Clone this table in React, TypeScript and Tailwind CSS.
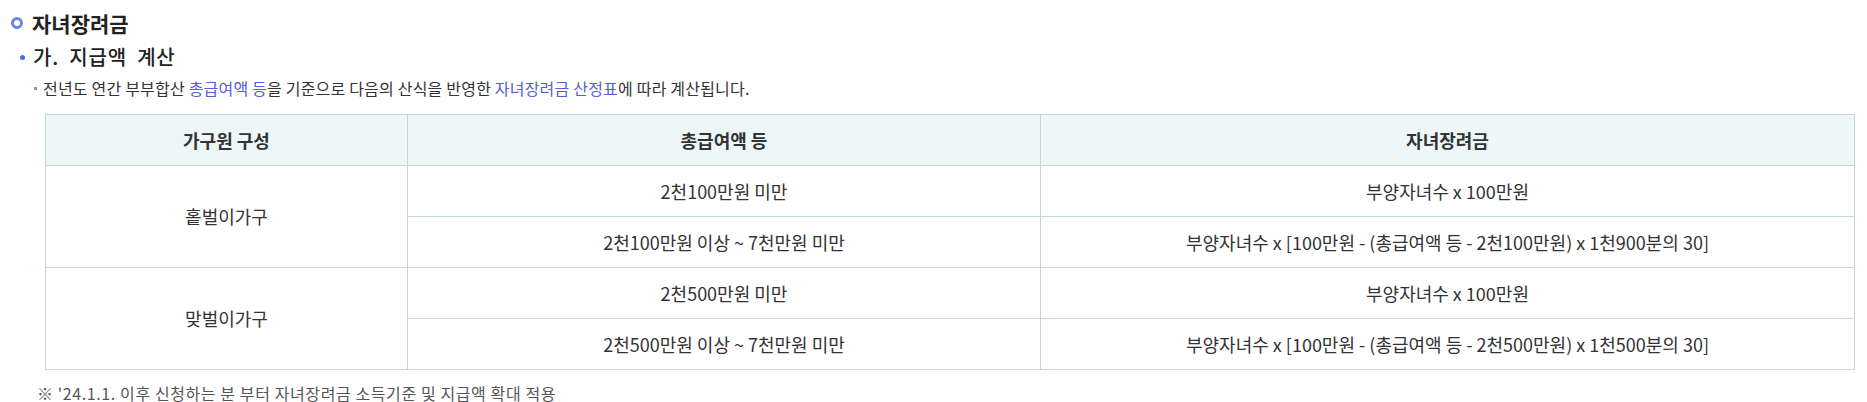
import React from 'react'

const FONT = { fontFamily: '"Noto Sans CJK KR", "Noto Sans", sans-serif' }

const GROUPS = [
  {
    name: '홑벌이가구',
    rows: [
      { income: '2천100만원 미만', amount: '부양자녀수 x 100만원' },
      { income: '2천100만원 이상 ~ 7천만원 미만', amount: '부양자녀수 x [100만원 - (총급여액 등 - 2천100만원) x 1천900분의 30]' },
    ],
  },
  {
    name: '맞벌이가구',
    rows: [
      { income: '2천500만원 미만', amount: '부양자녀수 x 100만원' },
      { income: '2천500만원 이상 ~ 7천만원 미만', amount: '부양자녀수 x [100만원 - (총급여액 등 - 2천500만원) x 1천500분의 30]' },
    ],
  },
]

const cell = 'border border-[#c2d6db] h-[51px] text-center align-middle text-[18px] text-[#333]'

export default function App() {
  return (
    <div className="bg-white w-[1867px] h-[402px] pl-[11px] pt-[12px] text-[#222]" style={FONT}>
      <h2 className="flex items-center gap-[9px] h-[22px]">
        <span className="w-[12px] h-[12px] rounded-full border-[3px] border-[#6b84e6]" aria-hidden="true" />
        <span className="font-bold text-[21px] leading-[22px]">자녀장려금</span>
      </h2>

      <h3 className="flex items-center gap-[8px] mt-[12px] pl-[9px] h-[22px]">
        <span className="w-[5px] h-[5px] rounded-full bg-[#4f6ee0]" aria-hidden="true" />
        <span className="font-medium text-[20px] leading-[22px] tracking-[0.8px] [word-spacing:5px]">가. 지급액 계산</span>
      </h3>

      <p className="flex items-center gap-[6px] mt-[9px] pl-[23px] h-[22px] text-[16px] text-[#333] tracking-[0.2px]">
        <span className="w-[3px] h-[3px] bg-[#999]" aria-hidden="true" />
        <span>
          전년도 연간 부부합산 <span className="text-[#5360d8]">총급여액 등</span>을 기준으로 다음의 산식을 반영한{' '}
          <span className="text-[#5360d8]">자녀장려금 산정표</span>에 따라 계산됩니다.
        </span>
      </p>

      <table className="mt-[15px] ml-[34px] w-[1810px] border-collapse table-fixed">
        <colgroup>
          <col className="w-[362px]" />
          <col className="w-[633px]" />
          <col />
        </colgroup>
        <thead>
          <tr className="bg-[#eef7f7]">
            <th className={`${cell} font-semibold text-[#222]`}>가구원 구성</th>
            <th className={`${cell} font-semibold text-[#222]`}>총급여액 등</th>
            <th className={`${cell} font-semibold text-[#222]`}>자녀장려금</th>
          </tr>
        </thead>
        <tbody>
          {GROUPS.map((g) =>
            g.rows.map((r, i) => (
              <tr key={g.name + i}>
                {i === 0 && (
                  <td rowSpan={2} className={cell}>
                    {g.name}
                  </td>
                )}
                <td className={cell}>{r.income}</td>
                <td className={cell}>{r.amount}</td>
              </tr>
            ))
          )}
        </tbody>
      </table>

      <p className="mt-[11px] pl-[26px] text-[16px] text-[#555] tracking-[0.6px]">
        ※ '24.1.1. 이후 신청하는 분 부터 자녀장려금 소득기준 및 지급액 확대 적용
      </p>
    </div>
  )
}
